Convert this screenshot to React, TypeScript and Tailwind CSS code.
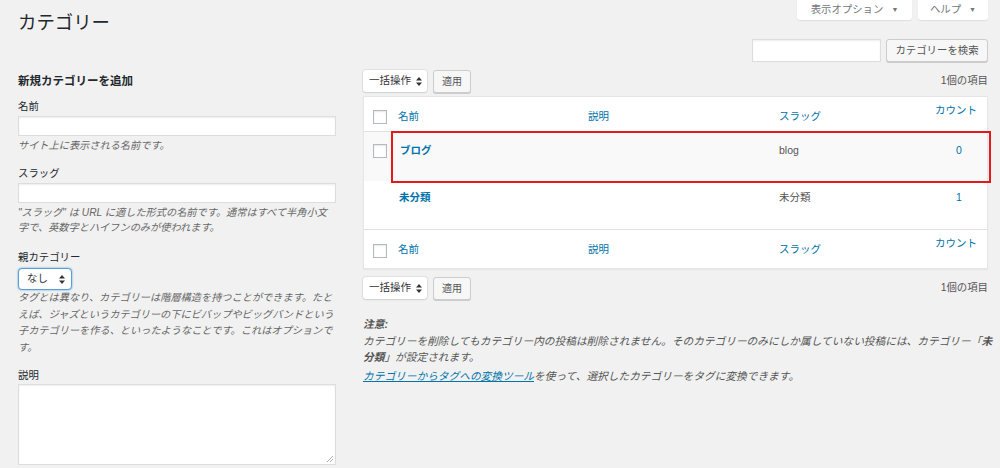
import React from 'react';

const font = "font-['Liberation_Sans','Noto_Sans_CJK_JP',sans-serif]";

function UpDown() {
  return (
    <svg width="6" height="9" viewBox="0 0 6 9" className="shrink-0">
      <path d="M3 0 L6 3.6 H0 Z M3 9 L0 5.4 H6 Z" fill="#333" />
    </svg>
  );
}

function Checkbox() {
  return (
    <span className="block w-[14px] h-[14px] border border-[#b4b9be] bg-white shadow-[inset_0_1px_2px_rgba(0,0,0,0.1)]" />
  );
}

function BulkBar() {
  return (
    <div className="flex items-center justify-between h-[22px]">
      <div className="flex items-center gap-[6px]">
        <div className="flex items-center justify-between w-[64px] h-[22px] bg-white rounded-[3px] pl-[6px] pr-[5px] shadow-[0_0_0_1px_rgba(0,0,0,0.06),0_1px_2px_rgba(0,0,0,0.08)] text-[10.5px] text-[#333]">
          <span>一括操作</span>
          <UpDown />
        </div>
        <button className="h-[23px] px-[8px] bg-[#f7f7f7] border border-[#ccc] rounded-[3px] shadow-[0_1px_0_#ccc] text-[10px] text-[#555]">
          適用
        </button>
      </div>
      <span className="text-[10.4px] text-[#555]">1個の項目</span>
    </div>
  );
}

function HeaderRow({ top }: { top: boolean }) {
  return (
    <div
      className={`flex ${top ? 'h-[35px] border-b border-[#e1e1e1]' : 'h-[39px] border-t border-[#e1e1e1]'} text-[10.5px] text-[#0073aa]`}
    >
      <div className={`w-[34px] pl-[9px] ${top ? 'pt-[13px]' : 'pt-[14px]'}`}>
        <Checkbox />
      </div>
      <div className="w-[190px] leading-[16px] pt-[11px]">名前</div>
      <div className="w-[191px] leading-[16px] pt-[11px]">説明</div>
      <div className="flex-1 leading-[16px] pt-[11px]">スラッグ</div>
      <div className="w-[56px] text-right pr-[10px] leading-[16px] whitespace-nowrap pt-[5px]">カウント</div>
    </div>
  );
}

export default function App() {
  return (
    <div className={`min-h-screen bg-[#f1f1f1] ${font} text-[#444]`}>
      <div className="pl-[18px] pr-[12px]">
        {/* title + screen tabs */}
        <div className="flex items-start justify-between h-[39px]">
          <h1 className="mt-[11px] text-[18.4px] leading-[24px] font-normal text-[#23282d]">カテゴリー</h1>
          <div className="flex gap-[6px]">
            <div className="flex items-center gap-[8px] w-[115px] h-[20px] justify-center bg-white rounded-b-[3px] shadow-[0_1px_1px_rgba(0,0,0,0.08)] text-[10.4px] text-[#72777c]">
              <span>表示オプション</span>
              <span className="text-[7px]">▼</span>
            </div>
            <div className="flex items-center gap-[8px] w-[70px] h-[20px] justify-center bg-white rounded-b-[3px] shadow-[0_1px_1px_rgba(0,0,0,0.08)] text-[10.4px] text-[#72777c]">
              <span>ヘルプ</span>
              <span className="text-[7px]">▼</span>
            </div>
          </div>
        </div>

        {/* search */}
        <div className="flex justify-end gap-[5px] h-[23px]">
          <div className="w-[129px] h-[23px] bg-white border border-[#ddd] shadow-[inset_0_1px_2px_rgba(0,0,0,0.07)]" />
          <button className="w-[102px] h-[23px] bg-[#f7f7f7] border border-[#ccc] rounded-[3px] shadow-[0_1px_0_#ccc] text-[10.4px] text-[#555]">
            カテゴリーを検索
          </button>
        </div>

        <div className="flex gap-[27px]">
          {/* left column */}
          <div className="w-[318px] shrink-0 min-w-0 pt-[11px]">
            <h2 className="text-[11.5px] leading-[16px] font-bold text-[#23282d]">新規カテゴリーを追加</h2>

            <div className="mt-[10px] text-[10.4px] leading-[16px] text-[#23282d]">名前</div>
            <div className="mt-[1px] h-[20px] bg-white border border-[#ddd] shadow-[inset_0_1px_2px_rgba(0,0,0,0.07)]" />
            <p className="mt-[2px] text-[10.2px] leading-[16px] italic text-[#666]">サイト上に表示される名前です。</p>

            <div className="mt-[12px] text-[10.4px] leading-[16px] text-[#23282d]">スラッグ</div>
            <div className="mt-[1px] h-[20px] bg-white border border-[#ddd] shadow-[inset_0_1px_2px_rgba(0,0,0,0.07)]" />
            <p className="mt-[2px] text-[10.2px] leading-[15px] italic text-[#666] whitespace-nowrap">
              "スラッグ" は URL に適した形式の名前です。通常はすべて半角小文
              <br />
              字で、英数字とハイフンのみが使われます。
            </p>

            <div className="mt-[15px] text-[10.4px] leading-[16px] text-[#23282d]">親カテゴリー</div>
            <div className="mt-[2px] flex items-center justify-between w-[54px] h-[22px] bg-white rounded-[4px] border border-[#5b9dd9] shadow-[0_0_2px_rgba(30,140,190,0.8)] pl-[8px] pr-[6px] text-[10.4px] text-[#333]">
              <span>なし</span>
              <UpDown />
            </div>
            <p className="mt-[0px] text-[10.2px] leading-[16.5px] italic text-[#666] whitespace-nowrap">
              タグとは異なり、カテゴリーは階層構造を持つことができます。たと
              <br />
              えば、ジャズというカテゴリーの下にビバップやビッグバンドという
              <br />
              子カテゴリーを作る、といったようなことです。これはオプションで
              <br />
              す。
            </p>

            <div className="mt-[12px] text-[10.4px] leading-[16px] text-[#23282d]">説明</div>
            <div className="relative h-[81px] bg-white border border-[#ddd] shadow-[inset_0_1px_2px_rgba(0,0,0,0.07)]">
              <svg width="8" height="8" viewBox="0 0 8 8" className="absolute right-[1px] bottom-[1px]">
                <path d="M7 1 L1 7 M7 4 L4 7" stroke="#999" strokeWidth="0.8" />
              </svg>
            </div>
          </div>

          {/* right column */}
          <div className="flex-1 min-w-0 pt-[8px]">
            <BulkBar />

            <div className="relative mt-[4px] bg-white border border-[#e5e5e5] shadow-[0_1px_1px_rgba(0,0,0,0.04)]">
              <HeaderRow top />
              <div className="flex h-[49px] bg-[#f9f9f9] text-[10.5px] leading-[14px]">
                <div className="w-[34px] pl-[9px] pt-[12px]">
                  <Checkbox />
                </div>
                <div className="w-[190px] pt-[11px] pl-[2px] font-bold text-[#0073aa]">ブログ</div>
                <div className="w-[191px]" />
                <div className="flex-1 pt-[11px] text-[#555]">blog</div>
                <div className="w-[56px] pt-[11px] text-center text-[#0073aa]">0</div>
              </div>
              <div className="flex h-[48px] text-[10.5px] leading-[14px]">
                <div className="w-[34px]" />
                <div className="w-[190px] pt-[9px] pl-[1px] font-bold text-[#0073aa]">未分類</div>
                <div className="w-[191px]" />
                <div className="flex-1 pt-[9px] text-[#555]">未分類</div>
                <div className="w-[56px] pt-[9px] text-center text-[#0073aa]">1</div>
              </div>
              <HeaderRow top={false} />

              {/* annotation */}
              <div className="absolute left-[27px] top-[34px] w-[600px] h-[52px] border-2 border-[#e3191b]" />
            </div>

            <div className="mt-[8px]">
              <BulkBar />
            </div>

            <div className="mt-[17px] text-[10.7px] leading-[16.5px] italic text-[#555] whitespace-nowrap">
              <p className="font-bold">注意:</p>
              <p>
                カテゴリーを削除してもカテゴリー内の投稿は削除されません。そのカテゴリーのみにしか属していない投稿には、カテゴリー「<b>未</b>
                <br />
                <b>分類</b>」が設定されます。
              </p>
              <p className="mt-[2px]">
                <a className="text-[#0073aa] underline">カテゴリーからタグへの変換ツール</a>を使って、選択したカテゴリーをタグに変換できます。
              </p>
            </div>
          </div>
        </div>
      </div>
    </div>
  );
}
